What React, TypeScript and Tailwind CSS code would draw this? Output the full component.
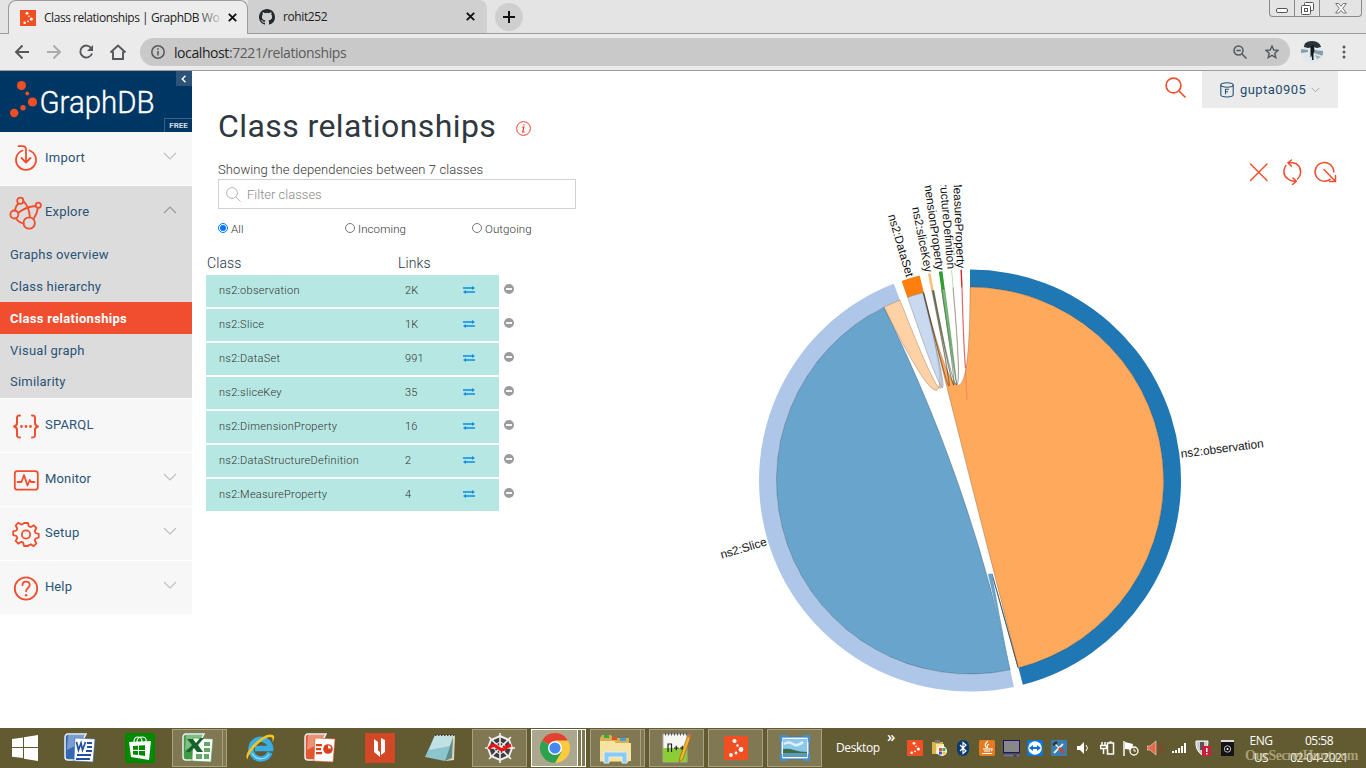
import React from "react";

const RUBIK = "font-['Roboto','Liberation_Sans',sans-serif]";
const SEGOE = "font-['Open_Sans','Noto_Sans',sans-serif]";

/* ---------- shared marks ---------- */

function GraphMark({ size }: { size: number }) {
  return (
    <svg width={size} height={size} viewBox="0 0 48 48">
      <rect width="48" height="48" fill="#f04e23" />
      <g fill="#fff">
        <circle cx="21" cy="10" r="4.2" />
        <circle cx="27" cy="19" r="2.4" />
        <circle cx="34" cy="27" r="4.8" />
        <circle cx="24" cy="34" r="2.8" />
        <circle cx="14" cy="38" r="3.8" />
      </g>
    </svg>
  );
}

function CloseX() {
  return (
    <svg width="9" height="9" viewBox="0 0 9 9" stroke="#111" strokeWidth="1.9">
      <path d="M.8.8l7.4 7.4M8.2.8L.8 8.2" />
    </svg>
  );
}

/* ---------- browser chrome ---------- */

function TabStrip() {
  return (
    <div className="relative flex h-[34px] bg-[#e4e4e4]">
      <div className="w-2 border-b border-[#9c9c9c]" />
      <div className="relative flex h-[34px] w-[240px] items-center rounded-t-lg border-x border-t border-[#9c9c9c] bg-[#ececec] pl-[11px]">
        <GraphMark size={16} />
        <div className={`ml-2 w-[182px] whitespace-nowrap text-[12px] tracking-[-0.46px] text-[#222] ${SEGOE}`}>
          Class relationships | GraphDB Wo
        </div>
        <div className="absolute right-[22px] h-5 w-7 bg-gradient-to-r from-[#ececec00] to-[#ececec]" />
        <div className="absolute right-[10px]"><CloseX /></div>
      </div>
      <div className="flex h-[34px] w-[239px] items-center rounded-tr-lg border-b border-[#9c9c9c] bg-[#d0d0d0] pl-[11px]">
        <svg width="16" height="16" viewBox="0 0 16 16" fill="#24292e">
          <path d="M8 0C3.58 0 0 3.58 0 8c0 3.54 2.29 6.53 5.47 7.59.4.07.55-.17.55-.38 0-.19-.01-.82-.01-1.49-2.01.37-2.53-.49-2.69-.94-.09-.23-.48-.94-.82-1.13-.28-.15-.68-.52-.01-.53.63-.01 1.08.58 1.23.82.72 1.21 1.87.87 2.33.66.07-.52.28-.87.51-1.07-1.78-.2-3.64-.89-3.64-3.95 0-.87.31-1.59.82-2.15-.08-.2-.36-1.02.08-2.12 0 0 .67-.21 2.2.82a7.6 7.6 0 0 1 4 0c1.53-1.04 2.2-.82 2.2-.82.44 1.1.16 1.92.08 2.12.51.56.82 1.27.82 2.15 0 3.07-1.87 3.75-3.65 3.95.29.25.54.73.54 1.48 0 1.07-.01 1.93-.01 2.2 0 .21.15.46.55.38A8.01 8.01 0 0 0 16 8c0-4.42-3.58-8-8-8z" />
        </svg>
        <span className={`ml-2 text-[12px] tracking-[-0.4px] text-[#222] ${SEGOE}`}>rohit252</span>
        <div className="ml-auto mr-3"><CloseX /></div>
      </div>
      <div className="flex flex-1 items-center border-b border-[#9c9c9c] pl-2">
        <div className="flex h-7 w-7 items-center justify-center rounded-full bg-[#cfcfcf]">
          <svg width="12" height="12" stroke="#111" strokeWidth="2"><path d="M6 0v12M0 6h12" /></svg>
        </div>
      </div>
      <div className="absolute right-[4px] top-0 flex h-[17px] w-[93px] rounded-b border-x border-b border-[#8a8a8a]">
        <div className="flex w-[25px] items-end justify-center border-r border-[#8a8a8a] pb-[3px]">
          <svg width="12" height="5"><rect x=".5" y=".5" width="11" height="4" rx="1.5" fill="#fff" stroke="#555" /></svg>
        </div>
        <div className="flex w-[25px] items-center justify-center border-r border-[#8a8a8a]">
          <svg width="13" height="13" fill="#fff" stroke="#555">
            <rect x="3.500" y=".5" width="9" height="8" rx="1" /><rect x=".5" y="3.500" width="9" height="9" rx="1" /><rect x="3.500" y="6.500" width="3" height="3" />
          </svg>
        </div>
        <div className="flex flex-1 items-center justify-center">
          <svg width="12" height="11" viewBox="0 0 12 11" fill="#fff" stroke="#666" strokeWidth=".9"><path d="M.7.5h3L6 3.300 8.300.5h3L7.800 5.300l3.500 4.700h-3L6 7.300 3.700 10h-3l3.500-4.700z" /></svg>
        </div>
      </div>
    </div>
  );
}

function AddressBar() {
  return (
    <div className="flex h-[37px] items-center border-b border-[#9c9c9c] bg-[#ebebeb] text-[#5a5d61]">
      <svg width="140" height="36" viewBox="0 34 140 36" fill="none" stroke="#54575b" strokeWidth="1.9">
        <path d="M29 52H16.500M22.500 45.500L16 52l6.500 6.500" />
        <path d="M47 52h12.500M53.500 45.500L60 52l-6.500 6.500" stroke="#aaa" />
        <path d="M91.300 48.200A6 6 0 1 0 92 53.500" /><path d="M93 45v6h-6z" fill="#54575b" stroke="none" />
        <path d="M110.500 52.500L118 45.500l7.500 7M113 51.500V59h10v-7.500" />
      </svg>
      <div className="flex h-7 w-[1150px] items-center rounded-full bg-[#c9c9c9] pl-[11px] pr-[11px]">
        <svg width="14" height="14" fill="none" stroke="#55585c" strokeWidth="1.500"><circle cx="7" cy="7" r="6.200" /><path d="M7 6v4.500M7 3.300v1.500" /></svg>
        <span className={`ml-[9px] text-[14px] tracking-[-0.42px] text-[#5b5b5b] ${SEGOE}`}><span className="text-[#222]">localhost</span>:7221/relationships</span>
        <svg className="ml-auto" width="14" height="14" fill="none" stroke="#55585c" strokeWidth="1.500"><circle cx="5.500" cy="5.500" r="4.500" /><path d="M9 9l4.500 4.500M3.300 5.500h4.500" /></svg>
        <svg className="ml-[18px]" width="14" height="14" viewBox="0 0 14 14" fill="none" stroke="#55585c" strokeWidth="1.400"><path d="M7 1l1.800 4 4.300.4-3.300 2.900 1 4.300L7 10.300l-3.800 2.300 1-4.300L.9 5.400 5.200 5z" /></svg>
      </div>
      <svg className="ml-[11px]" width="22" height="22" viewBox="0 0 22 22">
        <defs><clipPath id="avatar"><circle cx="11" cy="11" r="11" /></clipPath></defs>
        <g clipPath="url(#avatar)">
          <rect width="22" height="22" fill="#dfe9ee" /><path d="M4 0h14l2 6-4 1-4-1-5 1-4-1z" fill="#26343b" /><path d="M0 8l7 1v2l-7 1zM13 9l9 1v5l-9-3z" fill="#869daa" />
          <path d="M9.500 5l3-1 1 5-1 4v6h-1.500v-5l-1 3-.5-2z" fill="#15191b" /><path d="M14 14l6 2-4 2z" fill="#9dadb5" />
        </g>
      </svg>
      <svg className="ml-[19px]" width="4" height="14" fill="#55585c"><circle cx="2" cy="2" r="1.500" /><circle cx="2" cy="7" r="1.500" /><circle cx="2" cy="12" r="1.500" /></svg>
    </div>
  );
}

/* ---------- sidebar ---------- */

const iconBox = { width: 36, height: 36, viewBox: "0 0 36 36", fill: "none", stroke: "#f04e2f", strokeWidth: 1.8, strokeLinecap: "round" as const, strokeLinejoin: "round" as const };

const ImportIcon = () => (
  <svg {...iconBox}><path d="M14.500 9.500A10 10 0 1 0 21.500 9.500M10.500 5.200h4q3.500 0 3.500 3.500V21M13.500 17l4.500 4.500 4.500-4.500" /></svg>
);
const ExploreIcon = () => (
  <svg {...iconBox}>
    <circle cx="12.300" cy="5.700" r="3.100" /><circle cx="6.400" cy="19.500" r="4" /><circle cx="30.300" cy="10.200" r="2.600" /><circle cx="21.200" cy="28" r="5.700" />
    <path d="M10.500 8.500Q7.500 11 7 15.500M15.400 6.200Q21 11 22 22.300M10 18Q17 12 27.700 11M30 13Q29 19 25.500 24M8 23.300Q10.500 27.500 15.500 28.500" />
  </svg>
);
const SparqlIcon = () => (
  <svg {...iconBox} strokeWidth={2}>
    <path d="M12 7.500c-3 0-3 1-3 3v4.500c0 2-1 3-3 3.500 2 .5 3 1.500 3 3.500v4.500c0 2 0 3 3 3M24 7.500c3 0 3 1 3 3v4.500c0 2 1 3 3 3.500-2 .5-3 1.500-3 3.500v4.500c0 2 0 3-3 3" /><path d="M13.500 18.500h.01M18 18.500h.01M22.500 18.500h.01" strokeWidth="2.800" />
  </svg>
);
const MonitorIcon = () => (
  <svg {...iconBox}><rect x="6.800" y="9.200" width="23" height="18.500" rx="2.500" /><path d="M9.500 20h4l2.500-7 3.500 10.500 2.300-5.500 1.200 2h3.500" /></svg>
);
const SetupIcon = () => (
  <svg {...iconBox}>
    <path d="M16 7h4l.8 3.200 2 .9 2.900-1.800 2.700 2.700-1.700 3 .8 2 3.200.8v3.800l-3.200.9-.8 2 1.700 2.900-2.700 2.700-2.900-1.700-2 .8L20 30h-4l-.8-3.300-2-.8-3 1.700-2.600-2.700 1.700-2.900-.8-2-3.300-.9v-3.800l3.300-.8.8-2-1.700-3 2.600-2.700 3 1.800 2-.9z" /><circle cx="18" cy="18.500" r="4.200" />
  </svg>
);
const HelpIcon = () => (
  <svg {...iconBox}><circle cx="18" cy="18.500" r="11.200" /><path d="M14.500 15.200c0-2.200 1.500-3.500 3.500-3.500s3.700 1.300 3.700 3.300c0 3-3.600 3-3.600 6.300" /><path d="M18.100 25.200h.01" strokeWidth="2.400" /></svg>
);

function Chevron({ up = false }: { up?: boolean }) {
  return (
    <svg className="-mt-[5px] ml-auto mr-[15px]" width="14" height="8" fill="none" stroke={up ? "#9a9a9a" : "#c0c0c0"} strokeWidth="1.200">
      <path d={up ? "M1 7l6-6 6 6" : "M1 1l6 6 6-6"} />
    </svg>
  );
}

function NavItem({ icon, label, tracking, chevron = true, up = false }: { icon: React.ReactNode; label: string; tracking: string; chevron?: boolean; up?: boolean }) {
  return (
    <div className="flex h-[53px] items-center pl-2">
      {icon}
      <span className={`-mt-px ml-px text-[13px] text-[#2a5377] ${tracking}`}>{label}</span>
      {chevron && <Chevron up={up} />}
    </div>
  );
}

function Sidebar() {
  const sub = "flex h-8 items-center pl-[10px] text-[13px]";
  const plain = "text-[#2a5377]";
  return (
    <nav className="w-48 shrink-0">
      <div className="relative h-[61px] bg-[#003663]">
        <svg width="192" height="61" viewBox="0 71 192 61">
          <g fill="#f04e23">
            <circle cx="21.500" cy="85.500" r="4.500" /><circle cx="27.200" cy="93.500" r="1.900" /><circle cx="32.500" cy="102" r="4.600" /><circle cx="23" cy="107.700" r="2.700" /><circle cx="14.200" cy="113" r="4.200" />
          </g>
          <text x="39.500" y="113" fontFamily="Roboto, sans-serif" fontWeight="300" fontSize="32" fill="#fff" stroke="#fff" strokeWidth=".4" textLength="115" lengthAdjust="spacingAndGlyphs">GraphDB</text>
        </svg>
        <div className="absolute right-0 top-0 flex h-[15px] w-4 items-center justify-center bg-[#2b5478]">
          <svg className="-ml-px" width="5" height="8" fill="none" stroke="#fff" strokeWidth="1.400"><path d="M4.500.7L1.200 4l3.300 3.300" /></svg>
        </div>
        <div className="absolute bottom-0 right-0 flex h-[14px] w-7 items-center justify-center border-l border-t border-[#3c617f] text-[8px] font-bold text-[#d5dde4]">FREE</div>
      </div>
      <div className="border-b border-white bg-[#f7f7f7]"><NavItem icon={<ImportIcon />} label="Import" tracking="tracking-[0.25px]" /></div>
      <div className="h-[213px] border-b border-white bg-[#dcdcdc]">
        <NavItem icon={<ExploreIcon />} label="Explore" tracking="tracking-[0.2px]" up />
        <div className={`${sub} ${plain} tracking-[0.22px]`}>Graphs overview</div>
        <div className={`${sub} ${plain} -mt-px pt-px tracking-[0.2px]`}>Class hierarchy</div>
        <div className={`${sub} bg-[#f04e2f] pt-px font-bold tracking-[0.3px] text-white`}>Class relationships</div>
        <div className={`${sub} ${plain} pt-px tracking-[0.25px]`}>Visual graph</div>
        <div className={`${sub} ${plain} tracking-[0.2px]`}>Similarity</div>
      </div>
      <div className="border-b border-white bg-[#f7f7f7]"><NavItem icon={<SparqlIcon />} label="SPARQL" tracking="tracking-[0.2px]" chevron={false} /></div>
      <div className="border-b border-white bg-[#f7f7f7]"><NavItem icon={<MonitorIcon />} label="Monitor" tracking="tracking-[0.15px]" /></div>
      <div className="border-b border-white bg-[#f7f7f7]"><NavItem icon={<SetupIcon />} label="Setup" tracking="tracking-[0.25px]" /></div>
      <div className="bg-[#f7f7f7]"><NavItem icon={<HelpIcon />} label="Help" tracking="tracking-[0.1px]" /></div>
    </nav>
  );
}

/* ---------- class list ---------- */

const classes: [string, string][] = [
  ["ns2:observation", "2K"],
  ["ns2:Slice", "1K"],
  ["ns2:DataSet", "991"],
  ["ns2:sliceKey", "35"],
  ["ns2:DimensionProperty", "16"],
  ["ns2:DataStructureDefinition", "2"],
  ["ns2:MeasureProperty", "4"],
];

function Radio({ label, on = false }: { label: string; on?: boolean }) {
  return (
    <div className="flex w-[127px] items-center text-[11.500px] font-light text-[#333]">
      <svg className="-mt-[2px]" width="10" height="10" fill="#fff"><circle cx="5" cy="5" r="4.500" stroke={on ? "#0075ff" : "#767676"} />{on && <circle cx="5" cy="5" r="3" fill="#0075ff" />}</svg>
      <span className="ml-[3px] mt-px tracking-[0.1px]">{label}</span>
    </div>
  );
}

function ClassPanel() {
  return (
    <section className="w-[408px] shrink-0 pl-[14px]">
      <div className="flex h-[37px] items-center pl-3">
        <h1 className="w-[298px] whitespace-nowrap text-[32px] leading-[37px] tracking-[0.42px] text-[#2f3840]">Class relationships</h1>
        <svg className="mt-1" width="15" height="15" viewBox="0 0 15 15" fill="none" stroke="#ee3f31" strokeWidth="1"><circle cx="7.500" cy="7.500" r="6.900" /><path d="M5.800 6h2L6.700 11h2M7.900 3.200v1.300" strokeWidth="1.200" /></svg>
      </div>
      <p className="mt-[15px] h-[19px] pl-[12px] text-[13px] font-light leading-[19px] tracking-[0.1px] text-[#333]">Showing the dependencies between 7 classes</p>
      <div className="ml-3 flex h-[30px] w-[358px] items-center border border-[#d2d2d2] pl-[7px]">
        <svg width="15" height="15" fill="none" stroke="#b5b5b5" strokeWidth="1"><circle cx="6" cy="6" r="5.400" /><path d="M10 10l4.500 4.500" /></svg>
        <span className="ml-[6px] mt-px text-[13px] font-light tracking-[0px] text-[#8a8a8a]">Filter classes</span>
      </div>
      <div className="flex h-10 items-center pl-3"><Radio label="All" on /><Radio label="Incoming" /><Radio label="Outgoing" /></div>
      <div className="flex h-[26px] items-center pl-px pt-[2px] text-[14px] font-light tracking-[0.1px] text-[#1d3244]">
        <span className="w-[191px]">Class</span><span>Links</span>
      </div>
      <div className="flex flex-col gap-[2px]">
        {classes.map(([name, links]) => (
          <div key={name} className="flex h-8 items-center">
            <div className="flex h-8 w-[293px] items-center bg-[#b6e7e2] pl-[13px] text-[11px] font-light text-[#333]">
              <span className="w-[186px] tracking-[0.27px]">{name}</span>
              <span className="w-[58px] tracking-[0.1px]">{links}</span>
              <svg className="-mt-[2px]" width="12" height="8" viewBox="0 0 12 8" fill="#0b8fe8"><path d="M0 1.200h9V0L12 2 9 4V2.800H0zM12 5.200H3V4L0 6l3 2V6.800h9z" /></svg>
            </div>
            <svg className="-mt-1 ml-[5px]" width="10" height="10"><circle cx="5" cy="5" r="5" fill="#9c9c9c" /><path d="M2 5h6" stroke="#fff" strokeWidth="1.800" /></svg>
          </div>
        ))}
      </div>
    </section>
  );
}

/* ---------- chord diagram ---------- */

const CX = 970;
const CY = 480.5;
const R0 = 193.5;
const R1 = 211;

function pt(deg: number, r: number) {
  const a = (deg * Math.PI) / 180;
  return `${(CX + r * Math.sin(a)).toFixed(2)},${(CY - r * Math.cos(a)).toFixed(2)}`;
}
function ring(a: number, b: number) {
  const big = b - a > 180 ? 1 : 0;
  return `M${pt(a, R1)}A${R1},${R1} 0 ${big},1 ${pt(b, R1)}L${pt(b, R0)}A${R0},${R0} 0 ${big},0 ${pt(a, R0)}Z`;
}
function chord(a: number, b: number, c: number, d: number) {
  const arc = (x: number, y: number) => `A${R0},${R0} 0 ${y - x > 180 ? 1 : 0},1 ${pt(y, R0)}`;
  return `M${pt(a, R0)}${arc(a, b)}Q${CX},${CY} ${pt(c, R0)}${arc(c, d)}Q${CX},${CY} ${pt(a, R0)}Z`;
}
function loop(a: number, b: number) {
  return `M${pt(a, R0)}A${R0},${R0} 0 0,1 ${pt(b, R0)}Q${CX},${CY} ${pt(a, R0)}Z`;
}

const groups = [
  { name: "ns2:observation", a: 0, b: 165.5, color: "#1f77b4" },
  { name: "ns2:Slice", a: 168, b: 338.8, color: "#aec7e8" },
  { name: "ns2:DataSet", a: 341.1, b: 346.2, color: "#ff7f0e" },
  { name: "ns2:sliceKey", a: 348.5, b: 349.2, color: "#ffbb78" },
  { name: "ns2:DimensionProperty", a: 351.5, b: 352.5, color: "#2ca02c" },
  { name: "ns2:DataStructureDefinition", a: 354.9, b: 355.1, color: "#98df8a" },
  { name: "ns2:MeasureProperty", a: 357.4, b: 357.8, color: "#d62728" },
];

const chords: [string, string][] = [
  [chord(0, 165.5, 346, 346.2), "#ff7f0e"],
  [loop(168, 333.6), "#1f77b4"],
  [chord(333.6, 338.8, 345.9, 346), "#ffbb78"],
  [loop(341.2, 345.9), "#aec7e8"],
  [chord(348.9, 349.2, 351.5, 351.6), "#2ca02c"],
  [chord(346.1, 346.2, 348.6, 348.9), "#8a5a2b"],
  [loop(351.6, 352.5), "#2ca02c"],
  [chord(349.1, 349.2, 354.9, 355.05), "#ffbb78"],
];

function ChordDiagram() {
  return (
    <svg width="580" height="543" viewBox="700 185 580 543">
      {groups.map((g) => (
        <path key={g.name} d={ring(g.a, g.b)} fill={g.color} />
      ))}
      {chords.map(([d, color], i) => (
        <path key={i} d={d} fill={color} fillOpacity=".67" stroke="#000" strokeOpacity=".4" strokeWidth=".5" />
      ))}
      <path d="M992 574L1018 667.500Q1004 615 992 574z" fill="#3a5f78" stroke="#333" strokeOpacity=".6" strokeWidth=".9" />
      <path d="M988 574L992 573.500 999 612 1010 670z" fill="#69a3cb" />
      <path d="M962 287Q963.500 345 965.500 368" fill="none" stroke="#d62728" strokeOpacity=".7" strokeWidth="1.200" />
      <path d="M965.500 368L967 400" fill="none" stroke="#d62728" strokeOpacity=".25" strokeWidth="1" />
      <g fontFamily="Liberation Sans, Arial, sans-serif" fontSize="11.8" fill="#111">
        {groups.map((g) => {
          const mid = (g.a + g.b) / 2;
          const left = mid > 180;
          return (
            <text key={g.name} dy=".35em" textAnchor={left ? "end" : "start"}
              transform={`translate(${CX} ${CY}) rotate(${mid - 90}) translate(212.5 0)${left ? " rotate(180)" : ""}`}>
              {g.name}
            </text>
          );
        })}
      </g>
    </svg>
  );
}

function ChartPanel() {
  return (
    <section className="flex-1 pl-[100px]">
      <div className="flex h-[77px] items-end pl-[549px]">
        <svg width="90" height="26" viewBox="0 0 90 26" fill="none" stroke="#f04e2f" strokeWidth="1.500" strokeLinecap="round">
          <path d="M1.500 5L18 21.500M18 5L1.500 21.500" />
          <path d="M38 19.300A9 9 0 0 1 35.200 10.500M40.500 3.800H44A8.500 8.500 0 0 1 51.500 13.500M42.500 1L39 3.800l3.500 3.400M50.800 10A9 9 0 0 1 48.500 20M35.200 10.500Q36 7.500 37 6.500M37.500 18.500Q41 22.500 46.500 22.300M44 19l3.300 3.300-3.800 3.200" />
          <path d="M81 20.300A9.300 9.300 0 1 1 84.700 13M75 10.500l11.500 12M86.500 16.500v6h-6" />
        </svg>
      </div>
      <ChordDiagram />
    </section>
  );
}

function TopBar() {
  return (
    <div className="flex h-[37px] items-start justify-end pr-7">
      <svg className="mr-4 mt-[6px]" width="21" height="21" fill="none" stroke="#f04e2f" strokeWidth="1.700" strokeLinecap="round"><circle cx="8.500" cy="8.500" r="7.400" /><path d="M14 14l6 6" /></svg>
      <div className="flex h-[37px] w-[136px] items-center bg-[#ebebeb] pl-[18px]">
        <svg width="14" height="16" viewBox="0 0 14 16" fill="none" stroke="#265477" strokeWidth="1.100">
          <ellipse cx="7" cy="3" rx="6.200" ry="2.200" /><path d="M.8 3v9.800Q1 15 7 15t6.200-2.200V3M5.500 12.200V7.200h3.500M5.500 9.700h2.500" />
        </svg>
        <span className="ml-[6px] text-[13px] tracking-[0.45px] text-[#1f4b70]">gupta0905</span>
        <svg className="ml-[5px] mt-px" width="9" height="6" fill="none" stroke="#aaa"><path d="M.5.8l4 4 4-4" /></svg>
      </div>
    </div>
  );
}

/* ---------- taskbar ---------- */

function Office({ color, dark, children }: { color: string; dark: string; children: React.ReactNode }) {
  return (
    <svg width="32" height="30" viewBox="0 0 32 30">
      <path d="M4 1h18l-2 4-3 22H4Q1 27 1 24V5Q1 1 4 1z" fill={color} stroke="#eaf2f6" strokeWidth="1.500" />
      <path d="M4 2h17l-6 9L3 17z" fill="#fff" opacity=".35" /><path d="M11 5l20 1-2 23-19-1z" fill="#fff" stroke={color} strokeWidth=".6" />
      <g fill={dark}>{children}</g>
    </svg>
  );
}

function Tile({ children, active = false, stack = false }: { children: React.ReactNode; active?: boolean; stack?: boolean }) {
  return (
    <div className="mr-1 flex h-[38px] w-[55px]">
      <div className={`flex flex-1 items-center justify-center border ${active ? "border-white bg-[#aca78f]" : "border-[#a7a182] bg-[#807852]"}`}>{children}</div>
      {stack && <div className="w-[4px] border-y border-r border-[#a7a182] bg-[#807852]" />}
      {active && <div className="w-[4px] border-y border-r border-white bg-[#807852]" />}
      {active && <div className="w-[4px] border-y border-r border-white bg-[#807852]" />}
    </div>
  );
}

const trayIcons: React.ReactNode[] = [
  <GraphMark size={16} />,
  <svg width="17" height="16"><path d="M1 2h11v12H1z" fill="#d7b44e" /><path d="M4 0h5v3H4z" fill="#777" /><path d="M5 4h8v10H5z" fill="#f7e6a0" /><circle cx="11" cy="11" r="5" fill="#fff" /><path d="M8 8h3v3H8z" fill="#e44" /><path d="M11.500 8h3v3h-3z" fill="#4a4" /><path d="M8 11.500h3v3H8z" fill="#35c" /><path d="M11.500 11.500h3v3h-3z" fill="#eb3" /></svg>,
  <svg width="12" height="16"><rect width="12" height="16" rx="6" fill="#063a70" /><path d="M3 5l6 6-3 2.500v-11L9 5l-6 6" fill="none" stroke="#fff" strokeWidth="1.200" /></svg>,
  <svg width="16" height="16"><rect width="16" height="16" rx="2" fill="#e57a20" /><path d="M9 1Q4 5 8 8M10 4Q7 6 9 8M4 9h7M5 11h6M3 13.500h10M11 9q4-1 1 2" fill="none" stroke="#fff" strokeWidth="1.100" /></svg>,
  <svg width="17" height="17"><rect x=".5" y=".5" width="16" height="12" fill="#888" stroke="#171573" /><path d="M0 14h11v3H0zM13 14h4v3h-4z" fill="#777" stroke="#171573" strokeWidth=".5" /></svg>,
  <svg width="16" height="16"><rect width="16" height="16" rx="1" fill="#0e75d8" /><circle cx="8" cy="8" r="6.800" fill="#fff" /><path d="M2 8l4-3v2h4V5l4 3-4 3V9H6v2z" fill="#0e75d8" /></svg>,
  <svg width="16" height="16"><rect width="16" height="16" rx="1" fill="#397eae" /><path d="M3 13L12 4" stroke="#e3e7e9" strokeWidth="2" /><path d="M8 8l5 5" stroke="#c8452d" strokeWidth="2.500" /><path d="M4 4l4 4" stroke="#eee" strokeWidth="1.500" /><path d="M2 5l4-3" stroke="#333" strokeWidth="2.500" /></svg>,
  <svg width="13" height="14"><path d="M0 5h3l4-4v12L3 9H0z" fill="#fff" /><path d="M9 4q3 3 0 6" stroke="#fff" fill="none" /></svg>,
  <svg width="15" height="14" fill="none" stroke="#fff" strokeWidth="1.500"><rect x="7.500" y="2" width="6" height="11" /><path d="M9.500 1h2M2 1v3M5 1v3M.5 4.500h6v3h-6zM3.500 7v6" /></svg>,
  <svg width="16" height="15"><path d="M1 0v15" stroke="#fff" strokeWidth="1.500" /><path d="M2 1l8 2-1 6-7-1z" fill="#fff" /><circle cx="11" cy="10" r="4" fill="#635a30" stroke="#fff" strokeWidth="1.300" /><path d="M11 7.500V10h2" fill="none" stroke="#fff" /></svg>,
  <svg width="16" height="16"><path d="M0 6h3l6-5v14L3 10H0z" fill="#e4684a" stroke="#fff" strokeWidth=".5" /><path d="M11 5q2 3 0 6M13 3q4 5 0 10" stroke="#8a4524" fill="none" strokeWidth="1.500" /></svg>,
  <svg width="15" height="12" fill="#fff"><path d="M0 9h2v2H0zM3 8h2v3H3zM6 6h2v5H6zM9 4h2v7H9zM12 1h2v10h-2z" /></svg>,
  <svg width="16" height="16"><path d="M1 1h12q0 10-6 14Q0 10 1 1z" fill="#ccc" stroke="#fff" /><path d="M5 2h4v8H5z" fill="#555" /><rect x="7" y="6" width="9" height="10" fill="#c51f3c" /><path d="M11 8h1.500v4H11zM11 13h1.500v1.500H11z" fill="#fff" /></svg>,
  <svg width="13" height="16"><rect width="13" height="16" fill="#141414" /><rect width="13" height="2" fill="#ddd" /><circle cx="6.500" cy="9" r="3.200" fill="none" stroke="#bbb" /><circle cx="6.500" cy="9" r="1" fill="#fff" /></svg>,
];

function Taskbar() {
  return (
    <footer className={`flex h-10 items-center bg-[#625a30] text-white ${SEGOE}`}>
      <div className="flex w-[49px] justify-center">
        <svg width="26" height="26" fill="#fff"><path d="M0 4l11-1.500V12H0zM12 2.300L26 0v12H12zM0 13h11v10L0 21.800zM12 13h14v13l-14-2.200z" /></svg>
      </div>
      <div className="flex w-[61px] justify-center">
        <Office color="#3568b4" dark="#244f9c"><path d="M12.500 9l2 8 2.500-7 1.500 7L21.500 9" fill="none" stroke="#244f9c" strokeWidth="1.700" /><path d="M23 9h5v2h-5zM23 13h5v2h-5zM22 17h6v2h-6zM13 21h14v2H13zM12 25h14v2H12z" /></Office>
      </div>
      <div className="flex w-[60px] justify-center">
        <svg width="30" height="30"><path d="M0 0h30v30H0z" fill="#008a00" /><path d="M4 9l22-1-2 19-18-3z" fill="#fff" /><path d="M9 9q0-5 4-5t4 5M12 9q0-5 5-5t4 5" fill="none" stroke="#fff" strokeWidth="1.200" /><path d="M8 13l5-.3v4H8zM14 12.600l6-.4V17h-6zM8 18h5v4l-5-.6zM14 18h6v5l-6-.9z" fill="#008a00" /></svg>
      </div>
      <div className="ml-[2px] mr-[2px] flex">
        <Tile stack>
          <Office color="#3f9c43" dark="#62a765"><path d="M22 9h6v4h-6zM22 15h6v4h-6zM14 21h6v5h-6zM22 21h5v5h-5z" /><path d="M5 6h6l3 4 4-5h4l-6 7 5 7h-6l-3-4-4 4H4l6-7z" fill="#14642a" /></Office>
        </Tile>
      </div>
      <div className="-ml-[3px] flex w-[60px] justify-center">
        <svg width="32" height="32" viewBox="0 0 32 32">
          <path d="M26 20.500A9.800 9.800 0 1 1 26.600 16.500H11" fill="none" stroke="#38aee5" strokeWidth="5.500" /><path d="M25 22A9.500 9.500 0 0 1 8 21" fill="none" stroke="#8bd7f5" strokeWidth="1.500" />
          <path d="M4 28Q-1 24 9 13 22 0 29 3q3 2-1 8 2-6-2-6Q20 5 10 16 2 26 4 28z" fill="#f6c51f" />
        </svg>
      </div>
      <div className="flex w-[59px] justify-center">
        <Office color="#e1572f" dark="#d8411c"><path d="M12 11h6v2.200h-6zM12 15h5v2.200h-5zM12 19h6v2.200h-6z" /><circle cx="24" cy="16" r="4.800" /><path d="M24 15.500v-3q3 0 3 3z" fill="#fff" /></Office>
      </div>
      <div className="flex w-[61px] justify-center">
        <svg width="30" height="30"><path d="M0 0h30v30H0z" fill="#d24726" /><path d="M9 6l4 3v8.500l2 1.500v5L9 19zM16 5l4 2v12l-4 3z" fill="#fff" /></svg>
      </div>
      <div className="flex w-[62px] justify-center">
        <svg width="32" height="32"><path d="M10 3h20l-1 25-8 1z" fill="#ded8bd" /><path d="M10 3l18 2-8 24L0 25z" fill="#8bc6ce" /><path d="M10 3l18 2-3 9L4 18z" fill="#d8eef0" opacity=".7" /><path d="M10 3h20" stroke="#444" strokeDasharray="1.500 1.500" strokeWidth="2" /><path d="M28 5l-8 24 7-3z" fill="#5f8b8c" /></svg>
      </div>
      <Tile>
        <svg width="32" height="32" viewBox="-16 -16 32 32"><path d="M0-12L9-8 12 0 9 8 0 12-9 8-12 0-9-8z" fill="#3d3d3d" stroke="#eee" strokeWidth="2" /><path d="M0-15V15M-15 0H15M-11-11L11 11M11-11L-11 11" stroke="#eee" strokeWidth="1.600" /><path d="M0-6l4 2 2 4-2 4-4 2-4-2-2-4 2-4z" fill="none" stroke="#eee" /><path d="M-11 1q3-6 8-2t7 2 7-4" fill="none" stroke="#f01010" strokeWidth="3.300" /></svg>
      </Tile>
      <Tile active>
        <svg width="30" height="30" viewBox="-15 -15 30 30"><circle r="15" fill="#fbca3e" /><path d="M0 0L-13-7.500A15 15 0 0 1 13-7.500H0z" fill="#e34133" /><path d="M0 0L-13-7.500A15 15 0 0 0 0 15L6.500 3.800z" fill="#2da14f" /><circle r="7" fill="#fff" /><circle r="5.600" fill="#4688f1" /></svg>
      </Tile>
      <Tile stack>
        <svg width="33" height="31"><path d="M1 5l2-3h9l2 3h16v24H1z" fill="#d9ae4e" /><path d="M5 2h5v3H5z" fill="#2fae46" /><path d="M13 4h5v3h-5z" fill="#e34d30" /><path d="M21 5h6v3h-6z" fill="#3aa5e5" /><path d="M1 8h14l2 2h15v18H1z" fill="#f7e3a1" /><path d="M5 30V19h23v11h-5v-6H10v6z" fill="#8dcbee" stroke="#d4f0ff" /></svg>
      </Tile>
      <Tile>
        <svg width="31" height="32"><path d="M2 2h24v28H2z" fill="#f6f6f2" stroke="#aaa" /><path d="M2 16h24v14H2z" fill="#8ccd37" /><path d="M4 2h22" stroke="#555" strokeDasharray="1 2" strokeWidth="3" /><path d="M7 20v-8h3.500v8M13 16h4.500M15.250 13.700v4.600M19 16h4.500M21.250 13.700v4.600" fill="none" stroke="#202020" strokeWidth="1.200" /><path d="M19 25L27 3l3 1-8 23-4 3z" fill="#f3b52a" stroke="#97641b" strokeWidth=".7" /><path d="M27 2l3 1-1 3-3-1z" fill="#de6a56" /></svg>
      </Tile>
      <Tile><GraphMark size={24} /></Tile>
      <Tile>
        <svg width="30" height="26"><rect x="1" y="2" width="28" height="22" fill="#eef6fa" stroke="#377bbb" /><rect x="3" y="4" width="24" height="18" fill="#8ac8ec" /><path d="M4 9q5-3 9 0t10-2" stroke="#dff1fa" strokeWidth="2.500" fill="none" /><path d="M3 14q5-1 11 1t13 2v2H3z" fill="#397047" /><path d="M3 18h24v4H3z" fill="#5c9ab5" /><path d="M1 7V1h6M23 1h6v6M29 19v6h-6M7 25H1v-6" fill="none" stroke="#458fd1" strokeWidth="2.500" /></svg>
      </Tile>
      <span className="ml-[10px] w-[51px] text-[12px] tracking-[-0.35px]">Desktop</span>
      <span className="-mt-6 w-[16px] text-[15px] font-semibold leading-none">»</span>
      <div className="flex">
        {trayIcons.map((icon, i) => (
          <div key={i} className="flex w-6 items-center justify-center">{icon}</div>
        ))}
      </div>
      <div className="relative flex h-10 flex-1 text-center text-[12px] leading-[17px]">
        <div className="ml-[3px] w-[38px] pt-1 tracking-[-0.4px]">ENG<br />US</div>
        <div className="ml-[6px] w-[66px] pt-1 tracking-[-0.5px]">05:58<br />02-04-2021</div>
        <div className="absolute left-[6px] top-[19px] whitespace-nowrap font-['Liberation_Serif',serif] text-[14px] font-bold leading-[17px] tracking-[-0.5px] text-[#c9c09a]/70">OurSecretHunt.com</div>
      </div>
    </footer>
  );
}

export default function App() {
  return (
    <div className={`flex h-[768px] w-[1366px] flex-col overflow-hidden bg-white ${RUBIK}`}>
      <TabStrip />
      <AddressBar />
      <div className="flex h-[657px]">
        <Sidebar />
        <main className="flex flex-1 flex-col">
          <TopBar />
          <div className="flex">
            <ClassPanel />
            <ChartPanel />
          </div>
        </main>
      </div>
      <Taskbar />
    </div>
  );
}
